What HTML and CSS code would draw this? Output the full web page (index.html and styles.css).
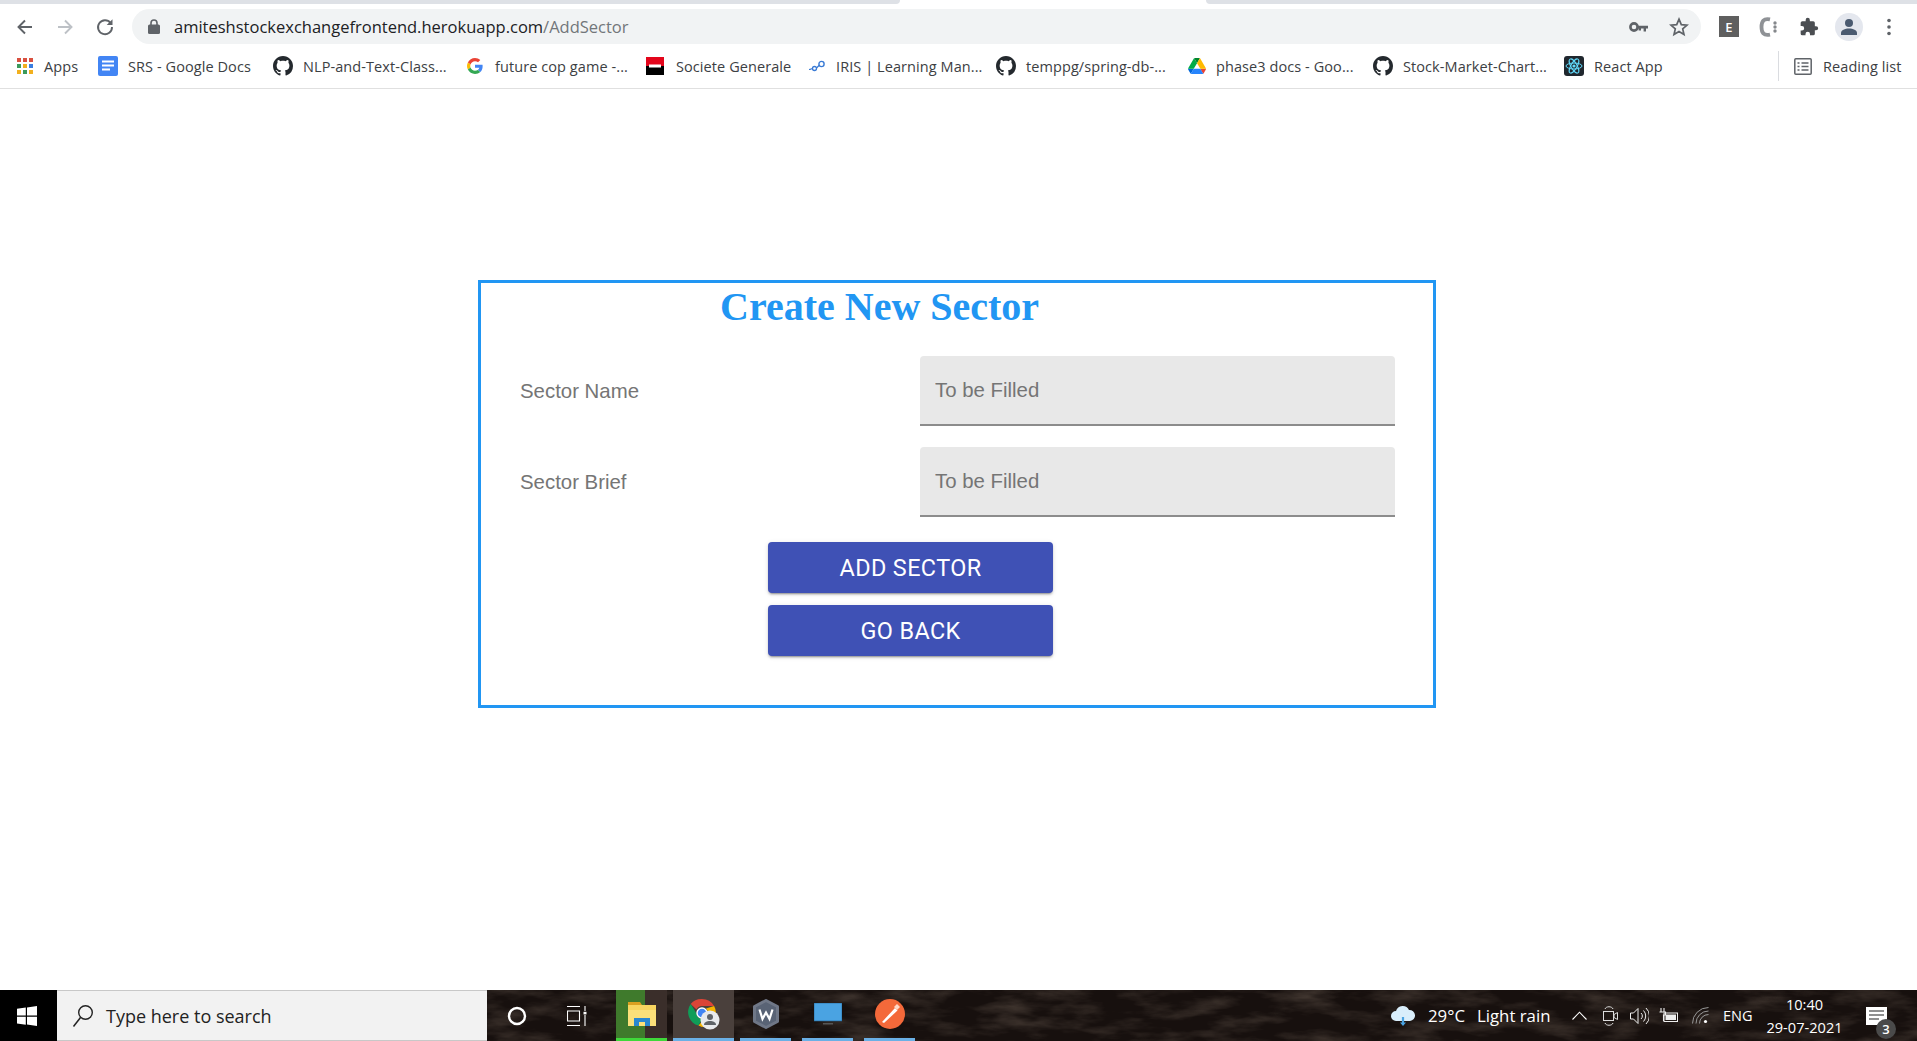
FILE: index.html
```html
<!DOCTYPE html>
<html lang="en">
<head>
<meta charset="utf-8">
<title>Add Sector</title>
<link rel="stylesheet" href="styles.css">
</head>
<body>
<svg class="defs" aria-hidden="true"><defs>
<symbol id="gh" viewBox="0 0 16 16"><path d="M8 0C3.58 0 0 3.58 0 8c0 3.54 2.29 6.53 5.47 7.59.4.07.55-.17.55-.38 0-.19-.01-.82-.01-1.49-2.01.37-2.53-.49-2.69-.94-.09-.23-.48-.94-.82-1.13-.28-.15-.68-.52-.01-.53.63-.01 1.08.58 1.23.82.72 1.21 1.87.87 2.33.66.07-.52.28-.87.51-1.07-1.78-.2-3.64-.89-3.64-3.95 0-.87.31-1.59.82-2.15-.08-.2-.36-1.02.08-2.12 0 0 .67-.21 2.2.82.64-.18 1.32-.27 2-.27s1.36.09 2 .27c1.53-1.04 2.2-.82 2.2-.82.44 1.1.16 1.92.08 2.12.51.56.82 1.27.82 2.15 0 3.07-1.87 3.75-3.65 3.95.29.25.54.73.54 1.48 0 1.07-.01 1.93-.01 2.2 0 .21.15.46.55.38A8.01 8.01 0 0 0 16 8c0-4.42-3.58-8-8-8z"/></symbol>
</defs></svg>

<div class="screen">
  <div class="tabstrip">
    <div class="strip-left"></div>
    <div class="strip-tab"></div>
    <div class="strip-right"></div>
  </div>

  <div class="toolbar">
    <span class="tool"><svg width="18" height="18" viewBox="0 0 18 18"><path d="M16 9H3M9 2.500 2.500 9 9 15.500" fill="none" stroke="#5f6368" stroke-width="1.900"/></svg></span>
    <span class="tool"><svg width="18" height="18" viewBox="0 0 18 18"><path d="M2 9h13M9 2.500 15.500 9 9 15.500" fill="none" stroke="#bdc1c6" stroke-width="1.900"/></svg></span>
    <span class="tool"><svg width="20" height="20" viewBox="0 0 20 20"><path d="M15.600 6A7 7 0 1 0 17 10" fill="none" stroke="#5f6368" stroke-width="1.900"/><path d="M17.500 2.200V8h-5.800z" fill="#5f6368"/></svg></span>
    <div class="omnibox">
      <svg class="lock" width="12" height="15" viewBox="0 0 12 15"><path d="M3 6V4a3 3 0 0 1 6 0v2" fill="none" stroke="#5f6368" stroke-width="1.600"/><rect y="5.500" width="12" height="9.500" rx="1.500" fill="#5f6368"/></svg>
      <span class="url"><span class="url-host">amiteshstockexchangefrontend.herokuapp.com</span>/AddSector</span>
      <span class="omni-actions">
        <span class="tool"><svg width="20" height="12" viewBox="0 0 20 12"><circle cx="5" cy="6" r="3.600" fill="none" stroke="#5f6368" stroke-width="2.600"/><path d="M8 4.800h11v2.600h-2v3h-2.400v-3H12v2H9.600v-2H8z" fill="#5f6368"/></svg></span>
        <span class="tool"><svg width="20" height="20" viewBox="0 0 20 20"><path d="M10 2.200l2.300 5.400 5.800.5-4.400 3.800 1.300 5.700-5-3-5 3 1.300-5.700L1.900 8.100l5.800-.5z" fill="none" stroke="#5f6368" stroke-width="1.700"/></svg></span>
      </span>
    </div>
    <div class="extensions">
      <span class="tool"><span class="ext-e">E</span></span>
      <span class="tool"><svg width="22" height="22" viewBox="0 0 22 22"><path d="M12 3.400C5.500 2 3.500 5.500 3.500 11s2 9 8.500 7.600" fill="none" stroke="#8f9296" stroke-width="3.800"/><circle cx="17" cy="7" r="1.700" fill="#85888c"/><circle cx="17" cy="11" r="1.700" fill="#85888c"/><circle cx="17" cy="15" r="1.700" fill="#85888c"/></svg></span>
      <span class="tool"><svg width="20" height="20" viewBox="0 0 24 24"><path fill="#4b4e52" d="M20.500 11H19V7a2 2 0 0 0-2-2h-4V3.500a2.500 2.500 0 0 0-5 0V5H4a2 2 0 0 0-2 2v3.800h1.500a2.700 2.700 0 0 1 0 5.400H2V20a2 2 0 0 0 2 2h3.800v-1.500a2.700 2.700 0 0 1 5.400 0V22H17a2 2 0 0 0 2-2v-4h1.500a2.500 2.500 0 0 0 0-5z"/></svg></span>
      <span class="tool"><span class="avatar"><svg width="20" height="20" viewBox="0 0 20 20"><circle cx="10" cy="6" r="4" fill="#4a5a70"/><path d="M2 18v-2c0-3 4-4.500 8-4.500s8 1.500 8 4.500v2z" fill="#4a5a70"/></svg></span></span>
      <span class="tool"><svg width="4" height="18" viewBox="0 0 4 18"><circle cx="2" cy="2.500" r="1.800" fill="#5f6368"/><circle cx="2" cy="9" r="1.800" fill="#5f6368"/><circle cx="2" cy="15.500" r="1.800" fill="#5f6368"/></svg></span>
    </div>
  </div>

  <div class="bookmarks">
    <div class="bm-grid">
      <div class="bm"><span class="bm-icon narrow"><svg width="18" height="18" viewBox="0 0 18 18"><g fill="#d9503f"><rect x="1" y="1" width="4" height="4"/><rect x="7" y="1" width="4" height="4"/><rect x="13" y="1" width="4" height="4"/></g><rect x="1" y="7" width="4" height="4" fill="#3a9a5b"/><rect x="7" y="7" width="4" height="4" fill="#f2b01e"/><rect x="13" y="7" width="4" height="4" fill="#3b7de0"/><rect x="1" y="13" width="4" height="4" fill="#f2b01e"/><rect x="7" y="13" width="4" height="4" fill="#3a9a5b"/><rect x="13" y="13" width="4" height="4" fill="#f2b01e"/></svg></span><span>Apps</span></div>
      <div class="bm"><span class="bm-icon"><svg width="20" height="20" viewBox="0 0 20 20"><rect width="20" height="20" rx="2" fill="#4285f4"/><path d="M4 5.500h12M4 9.500h12M4 13.500h8" stroke="#fff" stroke-width="2"/></svg></span><span>SRS - Google Docs</span></div>
      <div class="bm"><span class="bm-icon"><svg class="gh" width="20" height="20"><use href="#gh"/></svg></span><span>NLP-and-Text-Class...</span></div>
      <div class="bm"><span class="bm-icon narrow"><svg width="16" height="16" viewBox="0 0 48 48"><path fill="#EA4335" d="M24 9.500c3.500 0 6.700 1.300 9.100 3.500l6.800-6.800C35.800 2.400 30.300 0 24 0 14.600 0 6.500 5.400 2.600 13.300l7.900 6.100C12.400 13.700 17.700 9.500 24 9.500z"/><path fill="#4285F4" d="M46.900 24.500c0-1.600-.1-3.100-.4-4.500H24v9h12.900c-.6 3-2.200 5.500-4.700 7.200l7.700 6c4.500-4.200 7-10.300 7-17.700z"/><path fill="#FBBC05" d="M10.500 28.600C10 27.200 9.800 25.600 9.800 24s.3-3.200.7-4.600l-7.900-6.100C1 16.500 0 20.100 0 24s1 7.500 2.600 10.700z"/><path fill="#34A853" d="M24 48c6.500 0 11.900-2.100 15.900-5.800l-7.700-6c-2.100 1.400-4.900 2.300-8.200 2.300-6.300 0-11.600-4.200-13.500-9.900l-7.900 6.100C6.500 42.600 14.600 48 24 48z"/></svg></span><span>future cop game -...</span></div>
      <div class="bm"><span class="bm-icon"><svg width="18" height="18" viewBox="0 0 18 18"><rect width="18" height="9" fill="#e3051b"/><rect y="9" width="18" height="9" fill="#000"/><rect x="3" y="7.500" width="12" height="3" fill="#fff"/></svg></span><span>Societe Generale</span></div>
      <div class="bm"><span class="bm-icon narrow"><svg width="19" height="12" viewBox="0 0 19 12"><path d="M1 9.500c2 0 2-1 3.500-1M8.500 8l3-3" stroke="#3a7bd5" stroke-width="1.200" fill="none"/><circle cx="6.500" cy="8.500" r="2" fill="none" stroke="#3a7bd5" stroke-width="1.300"/><circle cx="13.500" cy="4" r="2.600" fill="none" stroke="#3a7bd5" stroke-width="1.400"/></svg></span><span>IRIS | Learning Man...</span></div>
      <div class="bm"><span class="bm-icon"><svg class="gh" width="20" height="20"><use href="#gh"/></svg></span><span>temppg/spring-db-...</span></div>
      <div class="bm"><span class="bm-icon narrow"><svg width="18" height="16" viewBox="0 0 87 78"><path d="M6.600 66.900l3.900 6.700c.8 1.400 1.900 2.500 3.200 3.300L27.500 53H0c0 1.600.4 3.100 1.200 4.500z" fill="#0066da"/><path d="M43.700 25L29.900 1.100c-1.300.8-2.400 1.900-3.200 3.300L1.200 48.500C.4 49.900 0 51.400 0 53h27.500z" fill="#00ac47"/><path d="M73.600 76.900c1.300-.8 2.400-1.900 3.200-3.300l1.600-2.800 7.700-13.300c.8-1.400 1.200-2.900 1.200-4.500H59.800l5.900 11.500z" fill="#ea4335"/><path d="M43.700 25L57.500 1.100C56.200.3 54.700 0 53.100 0H34.300c-1.600 0-3.100.4-4.400 1.100z" fill="#00832d"/><path d="M59.800 53H27.500L13.700 76.900c1.300.8 2.900 1.100 4.500 1.100h51c1.600 0 3.100-.4 4.400-1.100z" fill="#2684fc"/><path d="M73.400 26.500L60.700 4.400c-.8-1.400-1.900-2.500-3.200-3.300L43.700 25l16.100 28h27.400c0-1.600-.4-3.100-1.200-4.500z" fill="#ffba00"/></svg></span><span>phase3 docs - Goo...</span></div>
      <div class="bm"><span class="bm-icon"><svg class="gh" width="20" height="20"><use href="#gh"/></svg></span><span>Stock-Market-Chart...</span></div>
      <div class="bm"><span class="bm-icon"><svg width="20" height="20" viewBox="0 0 20 20"><rect width="20" height="20" rx="3" fill="#20272e"/><g fill="none" stroke="#61dafb" stroke-width="1"><ellipse cx="10" cy="10" rx="8" ry="3"/><ellipse cx="10" cy="10" rx="8" ry="3" transform="rotate(60 10 10)"/><ellipse cx="10" cy="10" rx="8" ry="3" transform="rotate(120 10 10)"/></g><circle cx="10" cy="10" r="1.600" fill="#61dafb"/></svg></span><span>React App</span></div>
    </div>
    <div class="reading"><svg width="18" height="17" viewBox="0 0 18 17"><rect x=".8" y=".8" width="16.400" height="15.400" rx="1" fill="none" stroke="#5f6368" stroke-width="1.500"/><path d="M3.500 5h2M3.500 8.500h2M3.500 12h2M7.500 5h7M7.500 8.500h7M7.500 12h7" stroke="#5f6368" stroke-width="1.500"/></svg><span>Reading list</span></div>
  </div>

  <main class="page">
    <section class="card">
      <h1 class="card-title">Create New Sector</h1>
      <form class="form">
        <label class="field-label" for="sector-name">Sector Name</label>
        <input class="field-input" id="sector-name" type="text" placeholder="To be Filled">
        <label class="field-label" for="sector-brief">Sector Brief</label>
        <input class="field-input" id="sector-brief" type="text" placeholder="To be Filled">
      </form>
      <div class="actions">
        <button class="btn" type="button">Add Sector</button>
        <button class="btn" type="button">Go Back</button>
      </div>
    </section>
  </main>

  <footer class="taskbar">
    <svg class="texture" aria-hidden="true" width="1430" height="51"><filter id="rock"><feTurbulence type="fractalNoise" baseFrequency=".02 .07" numOctaves="4" seed="7"/><feColorMatrix values="0 0 0 0 .34  0 0 0 0 .26  0 0 0 0 .2  1.500 0 0 0 -.62"/></filter><rect width="1430" height="51" filter="url(#rock)"/></svg>
    <div class="start"><svg width="20" height="20" viewBox="0 0 20 20"><path d="M0 2.800 8.800 1.600v8H0zM10 1.400 20 0v9.600H10zM0 10.800h8.800v7.900L0 17.500zM10 10.800h10V20l-10-1.400z" fill="#fff"/></svg></div>
    <div class="search"><svg width="22" height="24" viewBox="0 0 22 24"><circle cx="13.500" cy="8.500" r="6.800" fill="none" stroke="#222" stroke-width="1.400"/><path d="M8.500 13.500 1.500 22.500" stroke="#222" stroke-width="1.500"/></svg><span>Type here to search</span></div>
    <div class="task-tool"><svg width="20" height="20" viewBox="0 0 20 20"><circle cx="10" cy="10" r="8" fill="none" stroke="#fff" stroke-width="2.400"/></svg></div>
    <div class="task-tool"><svg width="21" height="20" viewBox="0 0 21 20"><path d="M0 .5h13M0 19.500h13M.5 5h12v10H.5zM18 0v5M18 9v11" fill="none" stroke="#fff" stroke-width="1.100"/><rect x="16.500" y="5.800" width="3" height="2.600" fill="#fff"/></svg></div>
    <div class="apps">
      <div class="app app-explorer"><svg width="28" height="24" viewBox="0 0 28 24"><path d="M0 0h12l2 3H0z" fill="#d9a021"/><rect y="3" width="28" height="21" fill="#f7d560"/><path d="M0 8h28v16H0z" fill="#fbe07a"/><path d="M6 24v-8h16v8h-5v-4h-6v4z" fill="#2a87d0"/></svg></div>
      <div class="app app-chrome"><svg width="32" height="32" viewBox="0 0 32 32"><path d="M14 1A14 14 0 0 1 26.100 8H14a6 6 0 0 0-5.500 3.500L2.700 5.900A14 14 0 0 1 14 1z" fill="#db4437"/><path d="M2.700 5.900 8.500 15.500A6 6 0 0 0 14 21l-3.500 6.600A14 14 0 0 1 2.700 5.900z" fill="#0f9d58"/><path d="M26.100 8A14 14 0 0 1 14 29l-3.500-1.400L17 20a6 6 0 0 0 1-9.500z" fill="#f4b400"/><circle cx="14" cy="15" r="5" fill="#4285f4" stroke="#fff" stroke-width="1.400"/><circle cx="22" cy="22" r="9.500" fill="#e8eaed"/><circle cx="22" cy="19" r="3" fill="#5f6368"/><path d="M16 27c0-3 3-4 6-4s6 1 6 4z" fill="#5f6368"/></svg></div>
      <div class="app"><svg width="30" height="30" viewBox="0 0 30 30"><path d="M15 1.500 26.500 7.500V22.500L15 28.500 3.500 22.500V7.500z" fill="#596375" stroke="#6f7787" stroke-width="3" stroke-linejoin="round"/><path d="M8.500 10.500l3 9.500L15 13.500 18.500 20l3-9.500" fill="none" stroke="#fff" stroke-width="2.200"/></svg></div>
      <div class="app app-gap"><svg width="28" height="22" viewBox="0 0 28 22"><rect width="28" height="18" fill="#4aa3e2"/><rect width="28" height="18" fill="none" stroke="#1f5f8f" stroke-width=".6"/><rect x="9" y="20" width="10" height="1.500" fill="#555"/></svg></div>
      <div class="app app-gap"><svg width="30" height="30" viewBox="0 0 30 30"><circle cx="15" cy="15" r="15" fill="#f4693a"/><path d="M7 23 20 9l2.500 2.500L9 24z" fill="#fff"/><path d="M19 8l3-3 3 3-3 3z" fill="#ffd9c9"/></svg></div>
    </div>
    <div class="tray">
      <svg width="26" height="22" viewBox="0 0 26 22"><path d="M6 16a5 5 0 0 1 0-10 7 7 0 0 1 13-1 5.500 5.500 0 0 1 1 11z" fill="#d9eefb"/><path d="M13 12v7" stroke="#4aa3e2" stroke-width="2.200"/><path d="M10 17.500h6L13 21z" fill="#4aa3e2"/></svg>
      <span class="tray-text">29°C</span>
      <span class="tray-text">Light rain</span>
      <svg width="15" height="9" viewBox="0 0 15 9"><path d="M.5 8.500 7.500 1.200l7 7.300" fill="none" stroke="#fff" stroke-width="1.100"/></svg>
      <svg width="15" height="20" viewBox="0 0 15 20"><path d="M2 3c1-3 7-3 8 0M2 17c1 3 7 3 8 0" fill="none" stroke="#ddd" stroke-width="1"/><rect x=".5" y="5.500" width="10" height="9" fill="none" stroke="#ddd"/><path d="M11 8.500 14.500 6.500v7L11 11.500z" fill="none" stroke="#ddd"/></svg>
      <svg width="19" height="18" viewBox="0 0 19 18"><path d="M.5 6h3L8 1.500v15L3.500 12h-3z" fill="none" stroke="#eee"/><path d="M11 6a4 4 0 0 1 0 6M13.500 3.500a8 8 0 0 1 0 11M16 1a11 11 0 0 1 0 16" fill="none" stroke="#eee"/></svg>
      <svg class="battery" width="20" height="16" viewBox="0 0 20 16"><path d="M3 0v4M6 0v4M1.500 4h6v3H5.500v6" fill="none" stroke="#eee" stroke-width="1.100"/><rect x="6" y="5" width="13.500" height="8.500" fill="none" stroke="#eee"/><rect x="7.500" y="6.500" width="10.500" height="5.500" fill="#eee"/></svg>
      <svg width="17" height="17" viewBox="0 0 17 17"><path d="M.5 16.500a16 16 0 0 1 16-16M4 16.500A12.500 12.500 0 0 1 16.500 4M7.500 16.500a9 9 0 0 1 9-9" fill="none" stroke="#999"/><circle cx="13.500" cy="14.500" r="1.600" fill="#fff"/></svg>
      <span class="tray-lang">ENG</span>
      <div class="clock"><span>10:40</span><span>29-07-2021</span></div>
      <div class="notify"><svg width="21" height="18" viewBox="0 0 21 18"><path d="M0 0h21v18H0z" fill="#fff"/><path d="M3 4h15M3 8h15M3 12h10" stroke="#222" stroke-width="1.100"/></svg><span class="badge">3</span></div>
    </div>
  </footer>
</div>
</body>
</html>
```

FILE: styles.css
```css
* { box-sizing: border-box; }
html, body { margin: 0; height: 100%; overflow: hidden; background: #fff; }
.defs { display: none; }
.screen { display: flex; flex-direction: column; height: 1041px; width: 1917px; font-family: "Open Sans", "Noto Sans", sans-serif; }

.tabstrip { display: flex; height: 4px; flex: none; }
.strip-left { width: 900px; background: #dee1e6; border-bottom-right-radius: 4px; }
.strip-tab { width: 306px; background: #fff; }
.strip-right { flex: 1; background: #dee1e6; border-bottom-left-radius: 4px; }

.toolbar { display: flex; align-items: center; height: 40px; flex: none; padding: 5px 0 0 5px; }
.tool { display: flex; align-items: center; justify-content: center; width: 40px; height: 35px; flex: none; }
.omnibox { display: flex; align-items: center; width: 1569px; height: 35px; margin-left: 7px; padding: 0 2px 0 16px; border-radius: 18px; background: #f1f3f4; }
.lock { flex: none; }
.url { margin-left: 14px; font-size: 16.5px; color: #72767a; white-space: nowrap; }
.url-host { color: #202124; }
.omni-actions { display: flex; margin-left: auto; }
.extensions { display: flex; margin-left: 8px; }
.ext-e { display: flex; align-items: center; justify-content: center; width: 20px; height: 21px; background: #5f5f5f; color: #fff; font-size: 13px; font-weight: 600; }
.avatar { display: flex; align-items: center; justify-content: center; width: 28px; height: 28px; border-radius: 50%; background: #e4e7ee; }

.bookmarks { display: flex; align-items: center; height: 45px; flex: none; padding-left: 16px; border-bottom: 1px solid #e0e0e0; font-size: 14.5px; letter-spacing: .08px; color: #3c4043; }
.bm-grid { display: grid; grid-template-columns: 82px 175px 194px 179px 162px 188px 192px 185px 191px 214px; flex: none; }
.bm { display: flex; align-items: center; white-space: nowrap; }
.bm-icon { display: flex; align-items: center; width: 30px; flex: none; }
.bm-icon.narrow { width: 28px; }
.gh { fill: #24292e; }
.reading { display: flex; align-items: center; gap: 11px; height: 30px; padding-left: 15px; border-left: 1px solid #dadce0; }

.page { flex: 1; }
.card { width: 958px; height: 428px; margin: 191px 0 0 478px; border: 3px solid #2196f3; }
.card-title { margin: 0; padding-left: 239px; font: bold 40px/48px "Liberation Serif", serif; color: #2196f3; }
.form { display: grid; grid-template-columns: 400px 475px; row-gap: 21px; align-items: center; margin: 25px 0 0 39px; }
.field-label { font: 20.4px "Liberation Sans", Arial, sans-serif; color: #757575; }
.field-input { height: 70px; padding: 0 15px; border: 0; border-bottom: 2px solid #8c8c8c; border-radius: 4px 4px 0 0; background: #e8e8e8; font: 20.4px "Liberation Sans", Arial, sans-serif; }
.field-input::placeholder { color: #757575; opacity: 1; }
.actions { display: flex; flex-direction: column; gap: 12px; width: 285px; margin: 25px 0 0 287px; }
.btn { height: 51px; padding-bottom: 1px; border: 0; border-radius: 4px; background: #3f51b5; color: #fff; font: 400 23.4px Roboto, sans-serif; text-transform: uppercase; letter-spacing: .4px; box-shadow: 0 3px 1px -2px rgba(0,0,0,.2), 0 2px 2px rgba(0,0,0,.14), 0 1px 5px rgba(0,0,0,.12); }

.taskbar { position: relative; display: flex; align-items: stretch; height: 51px; flex: none; background: #17100e; }
.texture { position: absolute; right: 0; top: 0; opacity: .4; }
.start, .search, .task-tool, .apps, .tray { position: relative; }
.start { display: flex; align-items: center; justify-content: center; width: 57px; padding-right: 3px; background: #000; }
.search { display: flex; align-items: center; gap: 12px; width: 430px; padding-left: 15px; background: #f2f2f2; border-top: 1px solid #c8c8c8; border-bottom: 1px solid #c8c8c8; font-size: 18px; color: #222; }
.task-tool { display: flex; align-items: center; justify-content: center; width: 60px; }
.apps { display: flex; gap: 6px; margin-left: 9px; }
.app { display: flex; align-items: center; justify-content: center; width: 51px; border-bottom: 3px solid #6ab0e6; }
.app-explorer { background: linear-gradient(90deg, #3f7a2c 0 56%, #3a2e2a 56%); border-bottom-color: #3fd83a; }
.app-chrome { width: 61px; background: #4a403c; }
.app-gap { margin-left: 5px; }
.tray { display: grid; grid-template-columns: 38px 49px 95px 31px 27px 30px 32px 31px 44px 99px 51px; align-items: center; width: 527px; margin-left: auto; color: #fff; }
.tray-text { font-size: 16.8px; white-space: nowrap; }
.tray-lang { font-size: 14.5px; }
.battery { margin-left: -2px; }
.clock { display: flex; flex-direction: column; align-items: center; gap: 5px; width: 75px; font-size: 14.6px; line-height: 18px; white-space: nowrap; }
.notify { position: relative; display: flex; }
.badge { position: absolute; left: 10px; top: 12px; display: flex; align-items: center; justify-content: center; width: 20px; height: 20px; border-radius: 50%; background: #4a4a4a; font-size: 13px; font-weight: 600; }
```
